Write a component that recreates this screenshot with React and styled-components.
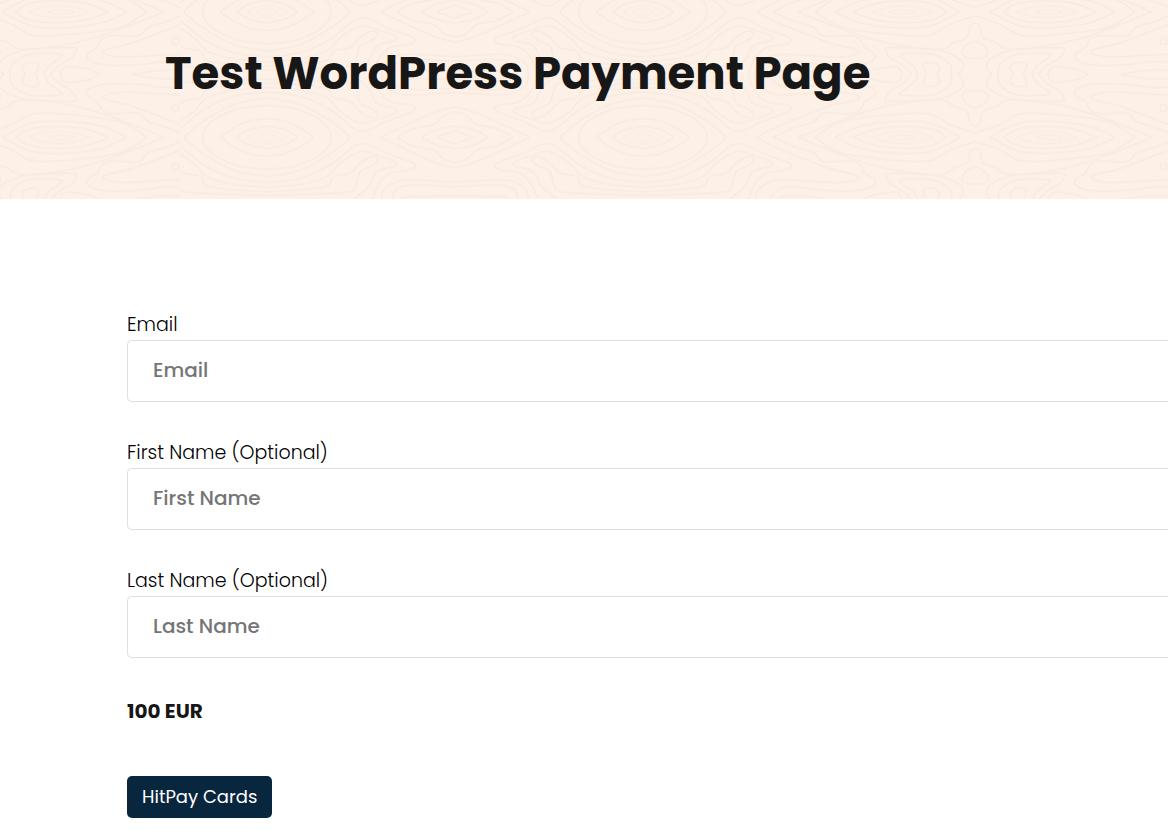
import React from 'react';
import styled, { createGlobalStyle } from 'styled-components';

// Contour lines are listed for one quarter of a motif and mirrored from there.
// Everything in the pattern is drawn at three times its size.
const EYE_LINES = [
    [[92, 0], [55, 22], [0, 34]],
    [[141, 0], [100, 28], [50, 50], [0, 56]],
    [[193, 0], [184, 28], [150, 58], [80, 87], [0, 96]],
    [[250, 0], [200, 43], [100, 98], [0, 118]],
    [[0, 136], [99, 123], [190, 83], [259, 28], [299, 20], [359, 48], [439, 78], [434, 96], [369, 108], [334, 143], [315, 189]],
    [[0, 150], [99, 141], [180, 118], [219, 78], [279, 43], [329, 53], [384, 73], [384, 86], [329, 103], [304, 148], [255, 189]],
    [[0, 163], [99, 158], [180, 146], [199, 118], [249, 108], [279, 78], [314, 58], [334, 68], [314, 86], [279, 103], [269, 138], [249, 163], [150, 170], [0, 175]],
];

const DIAMOND_LINES = [
    [[341, 0], [399, 28], [499, 73], [564, 92]],
    [[389, 0], [439, 26], [499, 38], [530, 66], [564, 76]],
    [[464, 0], [509, 23], [564, 34]],
    [[510, 0], [564, 20]],
    [[344, 189], [352, 155], [399, 130], [450, 128], [564, 135]],
    [[374, 189], [389, 155], [439, 143], [564, 148]],
    [[404, 189], [420, 178], [564, 176]],
];

const GRAIN_LINES = [
    [[341, 0], [411, 36], [531, 83], [571, 97], [636, 112], [646, 124], [591, 136], [471, 130], [391, 130], [345, 158], [336, 189]],
    [[391, 0], [451, 28], [511, 46], [541, 73], [621, 71], [651, 83], [666, 108], [696, 128], [686, 148], [631, 161], [531, 158], [471, 150], [411, 153], [376, 189]],
    [[466, 0], [531, 27], [671, 78], [801, 106], [901, 111], [931, 93], [971, 78], [981, 43], [996, 33]],
    [[516, 0], [601, 48], [771, 70], [861, 70], [921, 38], [996, 13]],
    [[576, 0], [651, 33], [761, 48], [861, 43], [951, 0]],
    [[631, 0], [700, 25], [790, 33], [870, 24], [911, 0]],
    [[996, 88], [971, 100], [956, 123], [971, 138], [996, 141]],
    [[946, 189], [961, 168], [951, 143], [891, 116], [821, 110], [736, 108], [729, 118], [741, 138], [781, 163], [807, 189]],
    [[926, 189], [921, 158], [871, 128], [791, 126], [771, 133], [811, 163], [825, 189]],
    [[881, 189], [891, 168], [871, 153], [841, 158], [851, 189]],
    [[406, 189], [425, 176], [500, 178], [560, 189]],
    [[656, 189], [691, 173], [761, 166], [778, 189]],
];

function smooth(points) {
    let d = `M${points[0].join(' ')}`;
    for (let i = 0; i < points.length - 1; i++) {
        const a = points[i - 1] || points[i];
        const b = points[i];
        const c = points[i + 1];
        const e = points[i + 2] || c;
        d += `C${b[0] + (c[0] - a[0]) / 6} ${b[1] + (c[1] - a[1]) / 6} ${c[0] - (e[0] - b[0]) / 6} ${c[1] - (e[1] - b[1]) / 6} ${c[0]} ${c[1]}`;
    }
    return d;
}

function Lines({ of }) {
    return of.map((points, i) => <path key={i} d={smooth(points)} />);
}

function WoodGrain() {
    return (
        <Backdrop aria-hidden="true">
            <defs>
                <g id="eye">
                    <Lines of={EYE_LINES} />
                    <path d="M-30 0C-20 13 20 13 30 0M-58 0C-35 25 35 25 58 0" strokeOpacity="0.5" />
                </g>
                <g id="eye-diamond">
                    <use href="#eye" />
                    <Lines of={DIAMOND_LINES} />
                </g>
                <g id="grain">
                    <Lines of={GRAIN_LINES} />
                    <path d="M690 0C740 24 820 24 870 0M735 0C755 9 795 9 815 0" strokeOpacity="0.6" />
                </g>
                <g id="half">
                    <g clipPath="url(#left-of-eye)">
                        <use href="#eye" transform="translate(261 0) scale(-1 1)" />
                    </g>
                    <g clipPath="url(#right-of-eye)">
                        <use href="#eye-diamond" transform="translate(261 0)" />
                        <use href="#eye-diamond" transform="translate(1389 0) scale(-1 1)" />
                    </g>
                    <g clipPath="url(#right-of-second-eye)">
                        <use href="#eye" transform="translate(1389 0)" />
                    </g>
                    <use href="#grain" transform="translate(1389 0)" />
                    <use href="#grain" transform="translate(3381 0) scale(-1 1)" />
                    <circle cx="2950" cy="88" r="10" />
                </g>
                <clipPath id="left-of-eye">
                    <rect width="261" height="189" />
                </clipPath>
                <clipPath id="right-of-eye">
                    <rect x="261" width="1128" height="189" />
                </clipPath>
                <clipPath id="right-of-second-eye">
                    <rect x="1389" width="500" height="189" />
                </clipPath>
                <pattern
                    id="wood"
                    width="2964"
                    height="377"
                    patternUnits="userSpaceOnUse"
                    patternTransform="scale(0.33333) translate(540 -153)"
                >
                    <g fill="none" stroke="#f7e9e0" strokeWidth="4">
                        <use href="#half" transform="translate(0 188)" />
                        <use href="#half" transform="translate(0 188) scale(1 -1)" />
                    </g>
                </pattern>
            </defs>
            <rect width="100%" height="100%" fill="url(#wood)" />
        </Backdrop>
    );
}

const FIELDS = [
    { id: 'email', type: 'email', label: 'Email', placeholder: 'Email' },
    { id: 'first-name', type: 'text', label: 'First Name (Optional)', placeholder: 'First Name' },
    { id: 'last-name', type: 'text', label: 'Last Name (Optional)', placeholder: 'Last Name' },
];

function App() {
    return (
        <>
            <GlobalStyle />
            <Banner>
                <WoodGrain />
                <Title>Test WordPress Payment Page</Title>
            </Banner>
            <Form onSubmit={(e) => e.preventDefault()}>
                {FIELDS.map((field) => (
                    <Field key={field.id}>
                        <Label htmlFor={field.id}>{field.label}</Label>
                        <Input id={field.id} type={field.type} placeholder={field.placeholder} />
                    </Field>
                ))}
                <Amount>100 EUR</Amount>
                <PayButton type="submit">HitPay Cards</PayButton>
            </Form>
        </>
    );
}

export default App;

const GlobalStyle = createGlobalStyle`
    * {
        box-sizing: border-box;
    }

    body {
        margin: 0;
        background: #fff;
        color: #171717;
        font-family: Poppins, Inter, "Open Sans", sans-serif;
    }
`

const Banner = styled.header`
    position: relative;
    min-height: 199px;
    padding: 44px 24px 44px 165px;
    background: #fdf0e6;
`

const Backdrop = styled.svg`
    position: absolute;
    inset: 0;
    width: 100%;
    height: 100%;
`

const Title = styled.h1`
    position: relative;
    margin: 0;
    font-size: 45px;
    font-weight: 700;
    line-height: 60px;
`

const Form = styled.form`
    display: flex;
    flex-direction: column;
    align-items: flex-start;
    padding: 112px 0 20px 127px;
`

const Field = styled.div`
    display: flex;
    flex-direction: column;
    width: 100%;
    margin-bottom: 37px;
`

const Label = styled.label`
    padding-bottom: 2px;
    color: #000;
    font-size: 19px;
    font-weight: 300;
    line-height: 27px;
`

const Input = styled.input`
    width: 100%;
    height: 62px;
    padding: 0 25px 2px;
    border: 1px solid #dfdfdf;
    border-right: 0;
    border-radius: 5px 0 0 5px;
    background: #fff;
    color: #171717;
    font: inherit;
    font-size: 20px;
    font-weight: 500;

    &::placeholder {
        color: #757575;
        opacity: 1;
    }
`

const Amount = styled.strong`
    font-size: 20px;
    font-weight: 700;
    line-height: 32px;
`

const PayButton = styled.button`
    height: 42px;
    margin-top: 49px;
    padding: 0 15px 2px;
    border: 0;
    border-radius: 5px;
    background: #09263f;
    color: #fff;
    font: inherit;
    font-size: 18px;
    cursor: pointer;
`
